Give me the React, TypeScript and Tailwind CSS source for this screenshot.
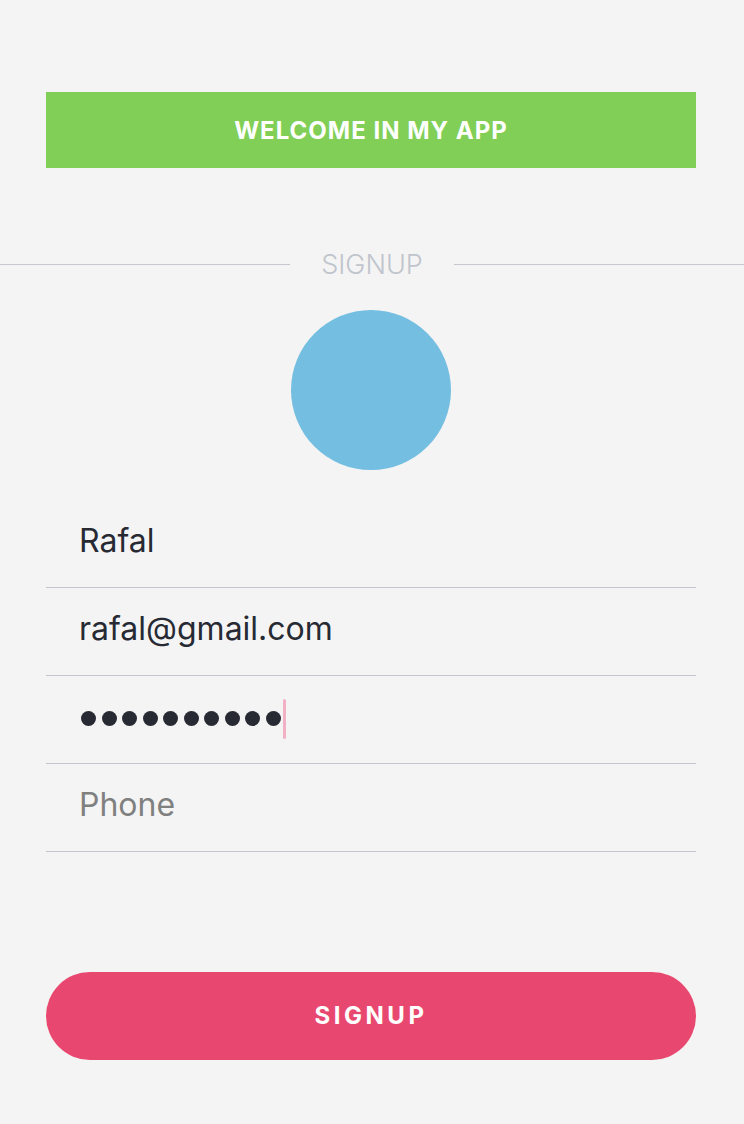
const font = "font-['Inter','Noto_Sans',sans-serif]";

function Field({ value, placeholder, password }: { value?: string; placeholder?: string; password?: boolean }) {
  return (
    <div className="h-[88px] border-b border-[#c4c4cc] flex items-center pl-[33px]">
      {password ? (
        <div className="flex items-center pl-[2px] pb-[2px]">
          <div className="flex gap-[5.5px]">
            {Array.from({ length: 10 }).map((_, i) => (
              <span key={i} className="w-[15px] h-[15px] rounded-full bg-[#272a33]" />
            ))}
          </div>
          <span className="ml-[2px] w-[3px] h-[40px] rounded-full bg-[#f2b0c4]" />
        </div>
      ) : value ? (
        <span className="text-[32px] text-[#272a33] pb-[5px]">{value}</span>
      ) : (
        <span className="text-[32px] text-[#808080] pb-[5px]">{placeholder}</span>
      )}
    </div>
  );
}

export default function App() {
  return (
    <div className={`w-[744px] h-[1124px] bg-[#f4f4f4] ${font} flex flex-col`}>
      <div className="ml-[46px] w-[650px] mt-[92px] h-[76px] bg-[#81cf57] flex items-center justify-center">
        <span className="text-white font-bold text-[24px] tracking-[1px] pt-[2px]">WELCOME IN MY APP</span>
      </div>

      <div className="mt-[80px] flex items-center h-[32px]">
        <div className="flex-1 h-px bg-[#c5c7d3]" />
        <span className="px-[31px] text-[27px] font-light text-[#c0c4cc] pt-[2px]">SIGNUP</span>
        <div className="flex-1 h-px bg-[#c5c7d3]" />
      </div>

      <div className="mt-[30px] flex justify-center pr-[2px]">
        <div className="w-[160px] h-[160px] rounded-full bg-[#74bee1]" />
      </div>

      <div className="ml-[46px] w-[650px] mt-[30px] flex flex-col">
        <Field value="Rafal" />
        <Field value="rafal@gmail.com" />
        <Field password />
        <Field placeholder="Phone" />
      </div>

      <button className="ml-[46px] w-[650px] mt-[120px] h-[88px] rounded-full bg-[#e8486f] text-white font-bold text-[24px] tracking-[3.5px]">
        SIGNUP
      </button>
    </div>
  );
}
